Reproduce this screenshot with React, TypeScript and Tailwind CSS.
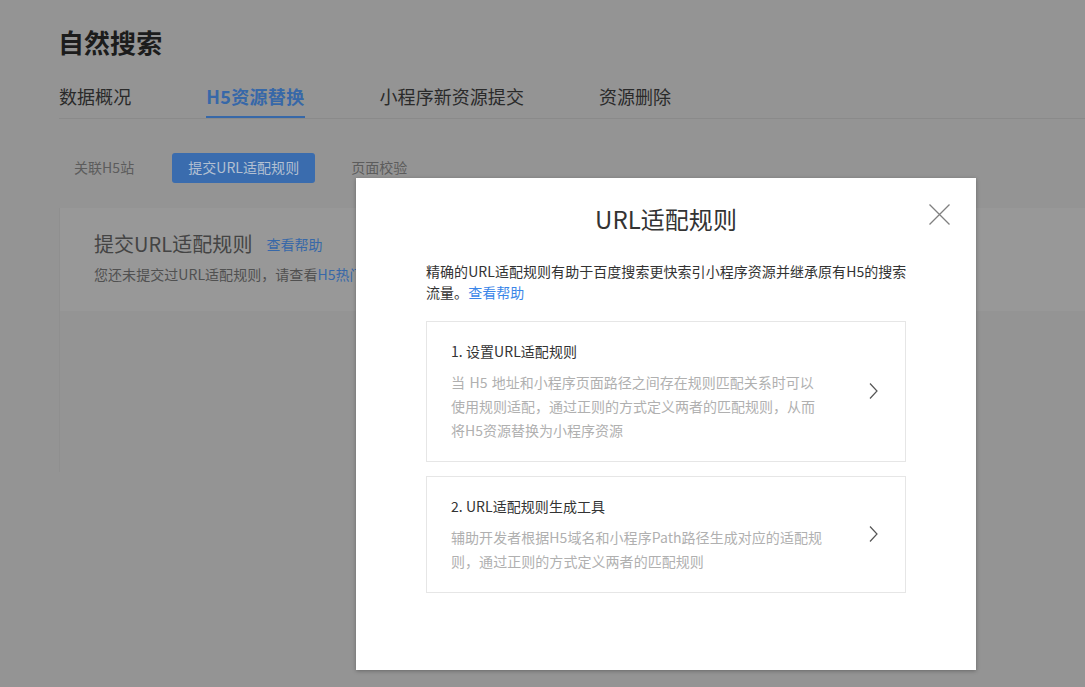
export default function App() {
  return (
    <div className="relative h-[687px] w-[1085px] overflow-hidden bg-[#949494] font-['Microsoft_YaHei','Noto_Sans_CJK_SC',sans-serif] text-[14px] tracking-[0.05px]">
      <div className="pl-[58px] pt-[25px]">
        <h1 className="text-[26px] font-bold leading-[34px] text-[#1c1c1c]">自然搜索</h1>
        <div className="ml-px mt-[18px] flex h-[42px] items-start gap-[75px] border-b border-[#8a8a8a] text-[18px] leading-[39px] text-[#2a2a2a]">
          <span>数据概况</span>
          <span className="h-[41px] border-b-2 border-[#3768a8] font-bold tracking-[0.35px] text-[#3768a8]">H5资源替换</span>
          <span>小程序新资源提交</span>
          <span>资源删除</span>
        </div>
        <div className="ml-px mt-[34px] flex items-center text-[#5c5c5c]">
          <span className="ml-[15px] pb-[2px]">关联H5站</span>
          <span className="ml-[38px] flex h-[30px] w-[143px] items-center justify-center rounded-[3px] bg-[#3a6cae] pb-[2px] text-[#b3c0d2]">提交URL适配规则</span>
          <span className="ml-[36px] pb-[2px]">页面校验</span>
        </div>
        <div className="ml-px mt-[25px] h-[264px] border-l border-[#8f8f8f]">
          <div className="h-[103px] bg-[#989898] pl-[34px] pt-[22px]">
            <div className="flex items-center">
              <span className="text-[20px] leading-[28px] text-[#444444]">提交URL适配规则</span>
              <span className="ml-[14px] text-[#3768a8]">查看帮助</span>
            </div>
            <div className="mt-[5px] whitespace-nowrap leading-[22px] text-[#505050]">
              您还未提交过URL适配规则，请查看<span className="text-[#3768a8]">H5热门</span>
            </div>
          </div>
        </div>
      </div>

      <div className="absolute left-[356px] top-[178px] h-[492px] w-[620px] bg-white px-[70px] pt-[23px] shadow-[0_1px_4px_rgba(0,0,0,0.3)]">
        <h2 className="text-center text-[24px] leading-[36px] text-[#333333]">URL适配规则</h2>
        <svg className="absolute left-[573px] top-[26px]" width="21" height="21" viewBox="0 0 21 21" fill="none" stroke="#808080" strokeWidth="1.3">
          <path d="M0.5 0.5 20.5 20.5M20.5 0.5 0.5 20.5" />
        </svg>
        <p className="mt-[24px] whitespace-nowrap leading-[21px] text-[#333333]">
          精确的URL适配规则有助于百度搜索更快索引小程序资源并继承原有H5的搜索<br />
          流量。<span className="text-[#3b86e8]">查看帮助</span>
        </p>
        <div className="mt-[18px] flex h-[141px] items-center justify-between border border-[#e6e6e6] pb-[2px] pl-[24px] pr-[27px]">
          <div className="w-[368px]">
            <div className="leading-[22px] text-[#333333]">1. 设置URL适配规则</div>
            <p className="mt-[8px] leading-[24px] tracking-normal text-[#b0b0b0] [word-spacing:1.3px]">
              当 H5 地址和小程序页面路径之间存在规则匹配关系时可以<br />
              使用规则适配，通过正则的方式定义两者的匹配规则，从而<br />
              将H5资源替换为小程序资源
            </p>
          </div>
          <Chevron />
        </div>
        <div className="mt-[14px] flex h-[117px] items-center justify-between border border-[#e6e6e6] pb-[2px] pl-[24px] pr-[27px]">
          <div className="w-[375px]">
            <div className="leading-[22px] text-[#333333]">2. URL适配规则生成工具</div>
            <p className="mt-[8px] leading-[24px] text-[#b0b0b0]">
              辅助开发者根据H5域名和小程序Path路径生成对应的适配规<br />
              则，通过正则的方式定义两者的匹配规则
            </p>
          </div>
          <Chevron />
        </div>
      </div>
    </div>
  );
}

function Chevron() {
  return (
    <svg width="9" height="16" viewBox="0 0 9 16" fill="none" stroke="#555555" strokeWidth="1.2">
      <path d="M1 0.5 8 8 1 15.5" />
    </svg>
  );
}
